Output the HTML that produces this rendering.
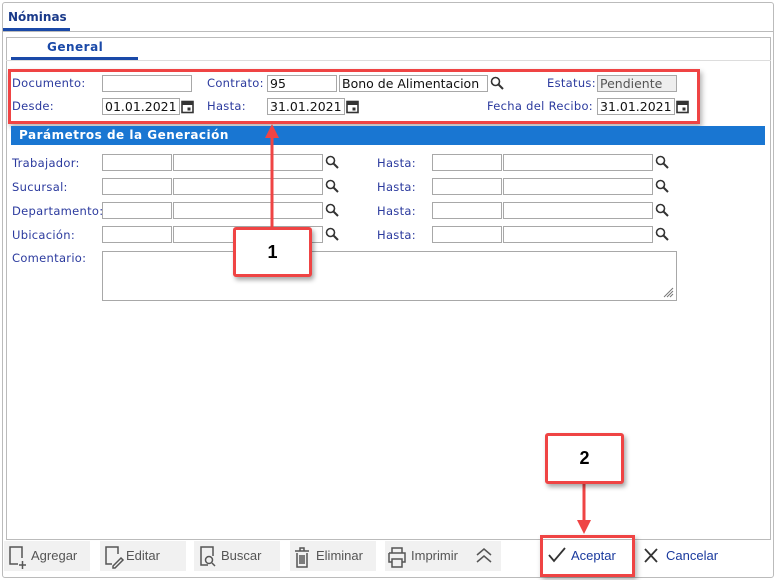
<!DOCTYPE html>
<html><head><meta charset="utf-8"><style>
*{box-sizing:border-box}
body{margin:0;width:776px;height:580px;background:#fff;font-family:Verdana,"DejaVu Sans",sans-serif;position:relative;overflow:hidden}
.a{position:absolute}
.l{position:absolute;font-size:11.5px;color:#2b3a9e;letter-spacing:.3px}
.i{position:absolute;height:17px;border:1px solid #a8a8a8;background:#fff;font-size:12.5px;color:#111;padding:0 2px;line-height:15px;font-family:"DejaVu Sans",sans-serif;white-space:nowrap;overflow:hidden}
.btn{position:absolute;top:541px;height:30px;background:#f1f1f1;font-size:13px;color:#555;font-family:"Liberation Sans",sans-serif;line-height:30px}
.rb{position:absolute;border:3px solid #ef4444;border-radius:3px;background:#fff;box-shadow:2px 3px 5px rgba(0,0,0,.35);font:bold 18px "Liberation Sans",sans-serif;text-align:center}
</style></head><body>
<div class="a" style="left:2px;top:2px;width:772px;height:576px;border:1px solid #bbb;border-radius:3px"></div>
<div class="a" style="left:8px;top:10px;font:bold 12px 'DejaVu Sans',sans-serif;color:#1a3a8a">Nóminas</div>
<div class="a" style="left:3px;top:28px;width:67px;height:3px;background:#1a49a8"></div>
<div class="a" style="left:3px;top:31px;width:771px;height:1px;background:#bbb"></div>
<div class="a" style="left:6px;top:37px;width:765px;height:503px;border:1px solid #bbb"></div>
<div class="a" style="left:47px;top:40px;font:bold 12px 'DejaVu Sans',sans-serif;color:#1a49a8;letter-spacing:.5px">General</div>
<div class="a" style="left:11px;top:57px;width:127px;height:3px;background:#1a49a8"></div>
<div class="a" style="left:6px;top:60px;width:765px;height:1px;background:#ddd"></div>

<div class="a" style="left:8px;top:69px;width:692px;height:55px;border:3px solid #ef4444;box-shadow:2px 3px 5px rgba(0,0,0,.3)"></div>
<div class="l" style="left:12px;top:76px">Documento:</div>
<div class="i" style="left:102px;top:75px;width:90px"></div>
<div class="l" style="left:207px;top:76px">Contrato:</div>
<div class="i" style="left:267px;top:75px;width:70px">95</div>
<div class="i" style="left:339px;top:75px;width:149px">Bono de Alimentacion</div>
<svg class="a" style="left:490px;top:76px" width="14" height="14"><circle cx="5.5" cy="5.5" r="4" fill="none" stroke="#333" stroke-width="1.6"/><path d="M8.5 8.5L13 13" stroke="#333" stroke-width="2"/></svg>
<div class="l" style="left:547px;top:76px">Estatus:</div>
<div class="i" style="left:597px;top:75px;width:80px;background:#eee;color:#555">Pendiente</div>
<div class="l" style="left:12px;top:99px">Desde:</div>
<div class="i" style="left:102px;top:98px;width:78px">01.01.2021</div>
<div class="l" style="left:207px;top:99px">Hasta:</div>
<div class="i" style="left:267px;top:98px;width:78px">31.01.2021</div>
<div class="l" style="left:487px;top:99px">Fecha del Recibo:</div>
<div class="i" style="left:597px;top:98px;width:78px">31.01.2021</div>
<svg class="a" style="left:181px;top:99px" width="13" height="15"><rect x="1" y="2.5" width="11" height="11" fill="none" stroke="#333" stroke-width="1.6"/><rect x="1" y="2.5" width="11" height="3.5" fill="#333"/><rect x="6.5" y="8.5" width="3" height="3" fill="#333"/></svg>
<svg class="a" style="left:346px;top:99px" width="13" height="15"><rect x="1" y="2.5" width="11" height="11" fill="none" stroke="#333" stroke-width="1.6"/><rect x="1" y="2.5" width="11" height="3.5" fill="#333"/><rect x="6.5" y="8.5" width="3" height="3" fill="#333"/></svg>
<svg class="a" style="left:676px;top:99px" width="13" height="15"><rect x="1" y="2.5" width="11" height="11" fill="none" stroke="#333" stroke-width="1.6"/><rect x="1" y="2.5" width="11" height="3.5" fill="#333"/><rect x="6.5" y="8.5" width="3" height="3" fill="#333"/></svg>

<div class="a" style="left:11px;top:126px;width:754px;height:19px;background:#1976d2;color:#fff;font:bold 12px 'DejaVu Sans',sans-serif;padding:2px 8px;letter-spacing:.5px">Parámetros de la Generación</div>

<div class="l" style="left:12px;top:156px">Trabajador:</div>
<div class="l" style="left:12px;top:180px">Sucursal:</div>
<div class="l" style="left:12px;top:204px">Departamento:</div>
<div class="l" style="left:12px;top:228px">Ubicación:</div>
<div class="l" style="left:377px;top:156px">Hasta:</div>
<div class="l" style="left:377px;top:180px">Hasta:</div>
<div class="l" style="left:377px;top:204px">Hasta:</div>
<div class="l" style="left:377px;top:228px">Hasta:</div>
<div id="rows"></div>
<div class="l" style="left:12px;top:251px">Comentario:</div>
<div class="i" style="left:102px;top:251px;width:575px;height:50px"></div>
<svg class="a" style="left:662px;top:286px" width="12" height="12"><path d="M11 2L2 11M11 5L5 11M11 8L8 11" stroke="#777"/></svg>

<svg class="a" style="left:0;top:0" width="776" height="580">
<path d="M272 228V133" stroke="#ef4444" stroke-width="3"/><path d="M265 138L272 124L279 138Z" fill="#ef4444"/>
<path d="M584 484V524" stroke="#ef4444" stroke-width="3"/><path d="M577 520L584 534L591 520Z" fill="#ef4444"/>
</svg>
<div class="rb" style="left:233px;top:227px;width:79px;height:50px;line-height:44px">1</div>
<div class="rb" style="left:545px;top:433px;width:79px;height:51px;line-height:45px">2</div>

<div class="btn" style="left:4px;width:86px;padding-left:27px">Agregar</div>
<div class="btn" style="left:100px;width:86px;padding-left:26px">Editar</div>
<div class="btn" style="left:194px;width:86px;padding-left:27px">Buscar</div>
<div class="btn" style="left:290px;width:86px;padding-left:26px">Eliminar</div>
<div class="btn" style="left:385px;width:86px;padding-left:26px">Imprimir</div>
<div class="btn" style="left:471px;width:30px"></div>
<svg class="a" style="left:0;top:540px" width="520" height="34">
<g fill="none" stroke="#555" stroke-width="1.5">
<path d="M18 24H10V7H22V18M19 25h7M22.5 21v8"/>
<path d="M112 24H106V7H118V14M113 26l8-8 2 2-8 8h-2z"/>
<path d="M208 25H201V7H213V16"/><circle cx="209" cy="20" r="3.5"/><path d="M212 23l3 3"/>
<path d="M295 11h14M300 11V8h4v3M297 13v14h10V13M300 15v9M302 15v9M304 15v9"/>
<path d="M392 13V8h10v5M389 13h16v9h-3M389 13v9h3M392 19h10v8H392z"/>
<path d="M477 15l7-6 7 6M477 22l7-6 7 6"/>
</g></svg>
<div class="a" style="left:540px;top:535px;width:95px;height:42px;border:3px solid #ef4444;box-shadow:2px 3px 5px rgba(0,0,0,.3)"></div>
<svg class="a" style="left:548px;top:547px" width="18" height="16"><path d="M1 8l5 6L17 1" fill="none" stroke="#333" stroke-width="1.8"/></svg>
<div class="a" style="left:571px;top:548px;font:13px 'Liberation Sans',sans-serif;color:#1a3a9e">Aceptar</div>
<svg class="a" style="left:643px;top:547px" width="16" height="17"><path d="M2 2l12 13M14 2L2 15" stroke="#333" stroke-width="1.8"/></svg>
<div class="a" style="left:666px;top:548px;font:13px 'Liberation Sans',sans-serif;color:#1a3a9e">Cancelar</div>
<script>
var h='';[154,178,202,226].forEach(function(y){[[102,70],[173,150],[432,70],[503,150]].forEach(function(p){h+='<div class="i" style="left:'+p[0]+'px;top:'+y+'px;width:'+p[1]+'px"></div>'});[325,655].forEach(function(x){h+='<svg class="a" style="left:'+x+'px;top:'+(y+1)+'px" width="14" height="14"><circle cx="5.5" cy="5.5" r="4" fill="none" stroke="#333" stroke-width="1.6"/><path d="M8.5 8.5L13 13" stroke="#333" stroke-width="2"/></svg>'})});
document.getElementById('rows').innerHTML=h;
</script>
</body></html>
